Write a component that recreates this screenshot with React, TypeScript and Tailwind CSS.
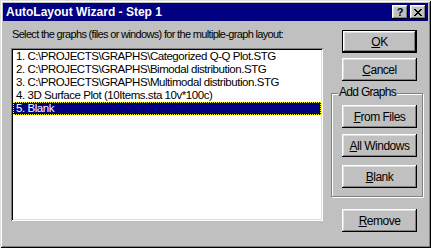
import React from "react";

const raised =
  "shadow-[inset_-1px_-1px_0_#000,inset_1px_1px_0_#fff,inset_-2px_-2px_0_#808080,inset_2px_2px_0_#dfdfdf]";

function Btn({
  children,
  def,
  className = "",
}: {
  children: React.ReactNode;
  def?: boolean;
  className?: string;
}) {
  if (def) {
    return (
      <div className={`w-[75px] h-[23px] border border-black bg-[#c0c0c0] ${className}`}>
        <div className={`w-full h-full flex items-center justify-center text-[12px] tracking-[-0.5px] leading-none text-black ${raised}`}>
          {children}
        </div>
      </div>
    );
  }
  return (
    <div
      className={`w-[75px] h-[23px] bg-[#c0c0c0] flex items-center justify-center text-[12px] tracking-[-0.5px] leading-none text-black ${raised} ${className}`}
    >
      {children}
    </div>
  );
}

export default function App() {
  const items = [
    "1. C:\\PROJECTS\\GRAPHS\\Categorized Q-Q Plot.STG",
    "2. C:\\PROJECTS\\GRAPHS\\Bimodal distribution.STG",
    "3. C:\\PROJECTS\\GRAPHS\\Multimodal distribution.STG",
    "4. 3D Surface Plot (10Items.sta 10v*100c)",
  ];
  return (
    <div className="w-[431px] h-[248px] bg-[#c0c0c0] p-[3px] flex flex-col font-['Liberation_Sans',Arial,sans-serif] shadow-[inset_1px_1px_0_#dfdfdf,inset_-1px_-1px_0_#000,inset_2px_2px_0_#fff,inset_-2px_-2px_0_#808080]">
      {/* caption */}
      <div className="h-[18px] bg-[#000080] flex items-center pl-[3px] pr-[2px] shrink-0">
        <span className="flex-1 text-white font-bold text-[12px] leading-none whitespace-nowrap">
          AutoLayout Wizard - Step 1
        </span>
        <div className={`w-[16px] h-[14px] bg-[#c0c0c0] flex items-center justify-center text-[11px] font-bold leading-none text-black ${raised}`}>
          ?
        </div>
        <div className={`ml-[2px] w-[16px] h-[14px] bg-[#c0c0c0] flex items-center justify-center ${raised}`}>
          <svg width="8" height="7" viewBox="0 0 8 7" shapeRendering="crispEdges">
            <path
              d="M0 0h2v1H0zM6 0h2v1H6zM1 1h2v1H1zM5 1h2v1H5zM2 2h4v1H2zM3 3h2v1H3zM2 4h4v1H2zM1 5h2v1H1zM5 5h2v1H5zM0 6h2v1H0zM6 6h2v1H6z"
              fill="#000"
            />
          </svg>
        </div>
      </div>

      {/* body */}
      <div className="flex flex-row flex-1">
        <div className="ml-[8px] w-[312px] flex flex-col">
          <div className="mt-[7px] pl-[1px] text-[11px] tracking-[-0.67px] leading-[13px] text-black whitespace-nowrap">
            Select the graphs (files or windows) for the multiple-graph layout:
          </div>
          <div className="mt-[7px] h-[173px] bg-white p-[2px] shadow-[inset_1px_1px_0_#808080,inset_-1px_-1px_0_#fff,inset_2px_2px_0_#000,inset_-2px_-2px_0_#dfdfdf]">
            {items.map((t) => (
              <div
                key={t}
                className="h-[13px] pl-[3px] text-[11.5px] tracking-[-0.45px] leading-[13px] text-black whitespace-nowrap overflow-hidden"
              >
                {t}
              </div>
            ))}
            <div className="h-[13px] pl-[2px] bg-[#000080] border border-dotted border-[#ffff00] text-[11.5px] tracking-[-0.45px] leading-[11px] text-white whitespace-nowrap">
              5. Blank
            </div>
          </div>
        </div>

        <div className="ml-[8px] w-[93px] flex flex-col">
          <Btn def className="ml-[11px] mt-[9px]">
            <span>
              <u>O</u>K
            </span>
          </Btn>
          <Btn className="ml-[11px] mt-[5px]">
            <span>
              <u>C</u>ancel
            </span>
          </Btn>
          <div className="relative mt-[12px] w-[92px] h-[104px] border border-[#808080] shadow-[inset_1px_1px_0_#fff,1px_1px_0_#fff] flex flex-col">
            <span className="absolute left-[6px] top-[-9px] px-[1px] bg-[#c0c0c0] text-[12px] tracking-[-0.7px] leading-[14px] text-black whitespace-nowrap">
              Add Graphs
            </span>
            <Btn className="ml-[10px] mt-[11px]">
              <span>
                <u>F</u>rom Files
              </span>
            </Btn>
            <Btn className="ml-[10px] mt-[6px]">
              <span>
                <u>A</u>ll Windows
              </span>
            </Btn>
            <Btn className="ml-[10px] mt-[8px]">
              <span>
                <u>B</u>lank
              </span>
            </Btn>
          </div>
          <Btn className="ml-[11px] mt-[12px]">
            <span>
              <u>R</u>emove
            </span>
          </Btn>
        </div>
      </div>
    </div>
  );
}
